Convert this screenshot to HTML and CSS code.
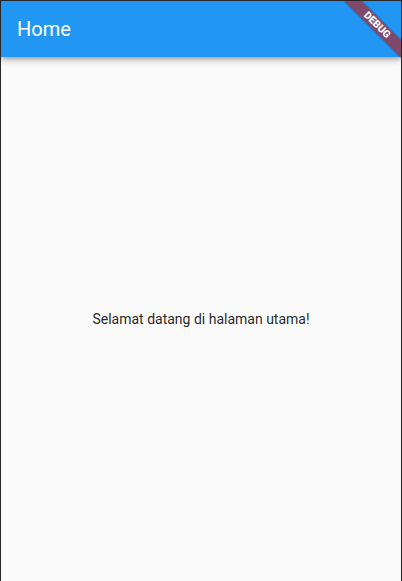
FILE: index.html
```html
<!DOCTYPE html>
<html lang="id">
<head>
<meta charset="utf-8">
<title>Home</title>
<link rel="stylesheet" href="styles.css">
</head>
<body>
<div class="frame">
  <header class="appbar">
    <h1 class="title">Home</h1>
  </header>
  <main class="content">
    <p class="welcome">Selamat datang di halaman utama!</p>
  </main>
  <div class="banner-clip">
    <div class="banner"><span>DEBUG</span></div>
  </div>
</div>
</body>
</html>
```
FILE: styles.css
```css
html, body {
  margin: 0;
  padding: 0;
  height: 100%;
  background: #fafafa;
}
.frame {
  position: relative;
  box-sizing: border-box;
  height: 581px;
  border: 1px solid #262626;
  border-bottom: none;
  display: flex;
  flex-direction: column;
  background: #fafafa;
  font-family: Roboto, "Noto Sans", sans-serif;
  overflow: hidden;
}
.appbar {
  position: relative;
  z-index: 1;
  height: 56px;
  flex: none;
  background: #2196f3;
  display: flex;
  align-items: center;
  padding: 0 16px;
  box-shadow: 0 2px 4px -1px rgba(0,0,0,0.2), 0 4px 5px 0 rgba(0,0,0,0.14), 0 1px 10px 0 rgba(0,0,0,0.12);
}
.title {
  margin: 0;
  color: #fff;
  font-size: 20px;
  font-weight: 400;
  line-height: 1;
}
.content {
  flex: 1;
  display: flex;
  align-items: center;
  justify-content: center;
}
.welcome {
  margin: 0;
  font-size: 14px;
  color: rgba(0,0,0,0.87);
}
.banner-clip {
  position: absolute;
  top: 0;
  right: 0;
  width: 80px;
  height: 80px;
  overflow: hidden;
  z-index: 2;
  pointer-events: none;
}
.banner {
  position: absolute;
  width: 80px;
  height: 12px;
  left: 80px;
  top: 0;
  transform-origin: 0 0;
  transform: rotate(45deg) translate(-40px, 28px);
  background: rgba(183, 28, 28, 0.63);
  box-shadow: 0 0 2px rgba(0,0,0,0.5);
  display: flex;
  align-items: center;
  justify-content: center;
}
.banner span {
  color: #fff;
  font-size: 10.2px;
  font-weight: 900;
  line-height: 1;
}
```
